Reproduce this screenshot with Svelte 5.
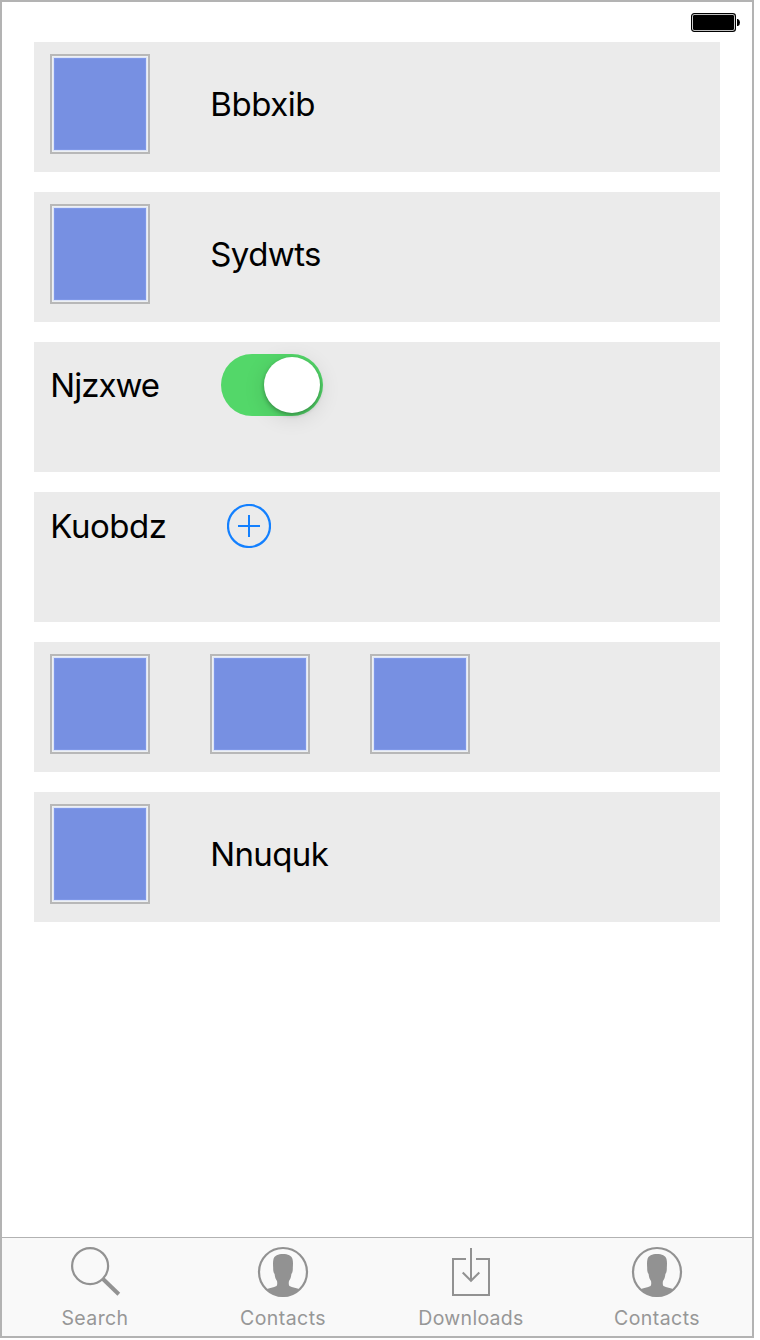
<script>
  const rows = [
    { images: 1, label: 'Bbbxib', spacing: -0.45 },
    { images: 1, label: 'Sydwts', spacing: -0.6 },
    { label: 'Njzxwe', control: 'switch', width: 170, spacing: -1 },
    { label: 'Kuobdz', control: 'add', width: 176, spacing: -0.45 },
    { images: 3 },
    { images: 1, label: 'Nnuquk', spacing: -0.65 }
  ];
  const tabs = [
    { icon: 'search', label: 'Search', spacing: 0.4 },
    { icon: 'contact', label: 'Contacts', spacing: 0.45 },
    { icon: 'download', label: 'Downloads', spacing: 0.3 },
    { icon: 'contact', label: 'Contacts', spacing: 0.45 }
  ];
  let on = $state(true);
</script>

<div class="phone">
  <header>
    <svg width="50" height="20" viewBox="0 0 50 20">
      <rect x="0.6" y="0.6" width="43.8" height="17.8" rx="2.6" fill="none" stroke="#000" stroke-width="1.2" />
      <rect x="2" y="2" width="41" height="15" rx="1.2" />
      <path d="M46 6h1q2 1 2 3.500t-2 3.500h-1z" />
    </svg>
  </header>
  <main>
    {#each rows as row}
      <section class:plain={row.control}>
        {#each Array(row.images ?? 0) as _}
          <div class="image"></div>
        {/each}
        {#if row.label}
          <span class="label" class:leading={row.control} style:width={row.width ? `${row.width}px` : null} style:letter-spacing="{row.spacing}px">{row.label}</span>
        {/if}
        {#if row.control === 'switch'}
          <button class="switch" class:on role="switch" aria-checked={on} aria-label={row.label} onclick={() => (on = !on)}><i></i></button>
        {:else if row.control === 'add'}
          <button class="add" aria-label={row.label}>
            <svg width="44" height="44" viewBox="0 0 44 44" fill="none" stroke="#1380ff" stroke-width="2">
              <circle cx="22" cy="22" r="21" stroke-width="2.2" /><path d="M22 11v22M11 22h22" />
            </svg>
          </button>
        {/if}
      </section>
    {/each}
  </main>
  <nav>
    {#each tabs as tab}
      <div class="tab">
        <svg width="52" height="52" viewBox="0 0 52 52" fill="none" stroke="#929292" stroke-width="2">
          {#if tab.icon === 'search'}
            <circle cx="21.100" cy="20.100" r="18" stroke-width="2.200" /><path d="M34 33 L49.800 48.200" stroke-width="4" />
          {:else if tab.icon === 'contact'}
            <circle cx="26" cy="26" r="24" stroke-width="2.200" />
            <path fill="#929292" stroke="none" d="M9 43.500C12 41.800 17 41.800 19.500 40C20.500 39 20.300 36.500 20 35C18.600 33 17.900 31 17.600 28C16.700 27 16 24.500 16.200 22C16 19 15.800 15.500 16.500 13C17.500 9.700 21 8 26 8C31 8 34.500 9.700 35.500 13C36.200 15.500 36 19 35.800 22C36 24.500 35.300 27 34.400 28C34.100 31 33.400 33 32 35C31.700 36.500 31.500 39 32.500 40C35 41.800 40 41.800 43 43.500C33 53 19 53 9 43.500Z" />
          {:else}
            <path d="M21 13H8v36h36V13H31" /><path d="M26 2v33M17.700 26.500l8.300 8.300 8.300-8.300" />
          {/if}
        </svg>
        <span style:letter-spacing="{tab.spacing}px">{tab.label}</span>
      </div>
    {/each}
  </nav>
</div>

<style>
  :global(body) { background: #fff; }
  .phone { box-sizing: border-box; width: 754px; height: 1338px; border: 2px solid #b3b3b3; background: #fff; display: flex; flex-direction: column; font-family: Inter, "Liberation Sans", sans-serif; color: #000; }
  header { box-sizing: border-box; height: 40px; padding: 11px 11px 0 0; display: flex; justify-content: flex-end; }
  main { flex: 1; padding: 0 32px; display: flex; flex-direction: column; gap: 20px; }
  section { box-sizing: border-box; height: 130px; padding: 12px 16px; background: #ebebeb; display: flex; gap: 60px; }
  section.plain { gap: 0; }
  .image { box-sizing: border-box; width: 100px; height: 100px; border: 2px solid #b8b8b8; background: #7790e2; box-shadow: inset 0 0 0 1px #edf0f2, inset 0 0 0 2px #dce3f8, inset 0 0 0 3px #7f98e8; }
  .label { box-sizing: border-box; padding-left: .3px; font-size: 33px; line-height: 100px; white-space: nowrap; }
  .label.leading { line-height: 44px; }
  .leading:has(+ .switch) { line-height: 62px; }
  button { border: 0; padding: 0; background: none; display: block; }
  .switch { box-sizing: border-box; width: 102px; height: 62px; border-radius: 31px; padding: 3px; background: #ccc; display: flex; margin-left: 1px; }
  .switch.on { background: #53d769; justify-content: flex-end; }
  .switch i { width: 56px; height: 56px; border-radius: 50%; background: #fff; box-shadow: 0 2px 4px rgba(0,0,0,.3), 0 4px 22px rgba(0,0,0,.12); }
  .add { margin-left: 1px; width: 44px; height: 44px; }
  .add svg { display: block; }
  nav { box-sizing: border-box; height: 99px; border-top: 1px solid #b2b2b2; background: #f9f9f9; display: grid; grid-template-columns: 186px 190px 186px 186px; }
  .tab { display: flex; flex-direction: column; align-items: center; padding-top: 8px; color: #979797; font-size: 19.500px; line-height: 24px; }
  .tab svg { display: block; }
  .tab span { margin-top: 8px; }
</style>
